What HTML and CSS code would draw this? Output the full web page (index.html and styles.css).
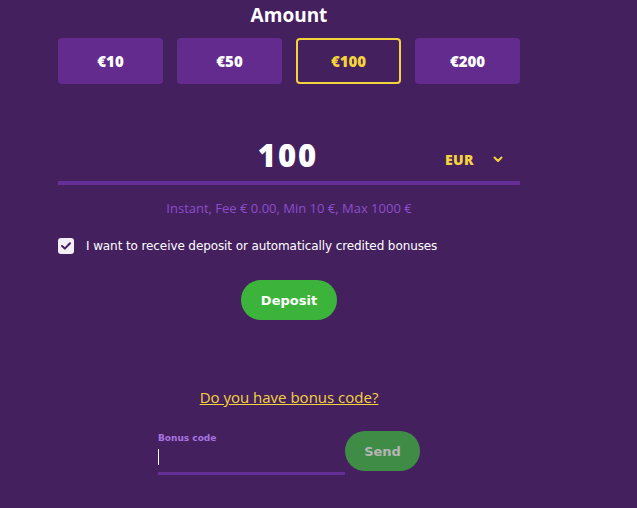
FILE: index.html
```html
<!DOCTYPE html>
<html>
<head>
<meta charset="utf-8">
<link rel="stylesheet" href="styles.css">
</head>
<body>
<div class="page">
  <div class="col">
    <h2 class="title">Amount</h2>
    <div class="amounts">
      <button class="amt">€10</button>
      <button class="amt">€50</button>
      <button class="amt active">€100</button>
      <button class="amt">€200</button>
    </div>
    <div class="field">
      <div class="value">100</div>
      <div class="currency">EUR
        <svg class="chev" width="10" height="7" viewBox="0 0 10 7"><path d="M1.5 1.5 L5 5 L8.5 1.5" fill="none" stroke="#f4d43c" stroke-width="2" stroke-linecap="round" stroke-linejoin="round"/></svg>
      </div>
    </div>
    <div class="info">Instant, Fee € 0.00, Min 10 €, Max 1000 €</div>
    <label class="check">
      <span class="box"><svg width="12" height="10" viewBox="0 0 12 10"><path d="M2 5 L4.8 7.6 L10 2.3" fill="none" stroke="#45205f" stroke-width="2" stroke-linecap="round" stroke-linejoin="round"/></svg></span>
      <span class="check-text">I want to receive deposit or automatically credited bonuses</span>
    </label>
    <div class="deposit-row"><button class="deposit">Deposit</button></div>
    <div class="bonus-link-row"><a class="bonus-link" href="#">Do you have bonus code?</a></div>
    <div class="bonus-row">
      <div class="bonus-field">
        <div class="bonus-label">Bonus code</div>
        <div class="bonus-input"><span class="caret"></span></div>
      </div>
      <button class="send">Send</button>
    </div>
  </div>
</div>
</body>
</html>
```

FILE: styles.css
```css
* { box-sizing: border-box; }
html, body { margin: 0; padding: 0; }
body {
  background: #45205f;
  width: 637px;
  height: 508px;
  overflow: hidden;
  font-family: "Open Sans", "DejaVu Sans", sans-serif;
}
.page { padding-left: 58px; }
.col { width: 462px; display: flex; flex-direction: column; }
.title {
  margin: 3px 0 0;
  text-align: center;
  color: #fff;
  font-size: 19px;
  font-weight: 700;
  line-height: 25px;
  height: 25px;
}
.amounts {
  margin-top: 10px;
  display: flex;
  gap: 14px;
}
.amt {
  width: 105px;
  height: 46px;
  border: none;
  border-radius: 4px;
  background: #622b8d;
  color: #fff;
  font-family: inherit;
  font-size: 15px;
  font-weight: 800;
  padding: 0;
}
.amt.active {
  background: transparent;
  border: 2px solid #f4d43c;
  color: #f4d43c;
}
.field {
  margin-top: 48px;
  height: 53px;
  border-bottom: 4px solid #652f97;
  position: relative;
  display: flex;
  justify-content: center;
  align-items: center;
}
.value {
  color: #fff;
  font-size: 31px;
  font-weight: 800;
  letter-spacing: 2px;
  line-height: 40px;
  margin-top: -3px;
  margin-left: -2px;
}
.currency {
  position: absolute;
  left: 387px;
  top: 18px;
  color: #f4d43c;
  font-size: 14px;
  font-weight: 800;
  letter-spacing: 0.3px;
  display: flex;
  align-items: center;
  gap: 19px;
}
.info {
  margin-top: 14px;
  text-align: center;
  color: #8a4ecb;
  font-size: 13px;
  line-height: 18px;
}
.check {
  margin-top: 20px;
  display: flex;
  align-items: center;
  gap: 12px;
  height: 18px;
}
.box {
  width: 16px;
  height: 16px;
  border-radius: 3px;
  background: #f3eef8;
  display: flex;
  align-items: center;
  justify-content: center;
}
.check-text {
  color: #fff;
  font-family: "DejaVu Sans", sans-serif;
  font-size: 12px;
  letter-spacing: -0.1px;
}
.deposit-row {
  margin-top: 25px;
  display: flex;
  justify-content: center;
}
.deposit {
  width: 96px;
  height: 40px;
  border: none;
  border-radius: 20px;
  background: #3cb43c;
  color: #fff;
  font-family: "DejaVu Sans", sans-serif;
  font-size: 13px;
  font-weight: 700;
  padding: 0;
}
.bonus-link-row {
  margin-top: 67px;
  display: flex;
  justify-content: center;
}
.bonus-link {
  color: #f4d43c;
  font-size: 15px;
  line-height: 20px;
}
.bonus-row {
  margin-top: 25px;
  margin-left: 100px;
  display: flex;
  align-items: flex-start;
}
.bonus-field { width: 187px; }
.bonus-label {
  color: #a775e0;
  font-family: "DejaVu Sans", sans-serif;
  font-size: 9px;
  font-weight: 700;
  line-height: 12px;
}
.bonus-input {
  height: 31px;
  border-bottom: 3px solid #652f97;
  padding-top: 5px;
}
.caret {
  display: block;
  width: 1px;
  height: 16px;
  background: #fff;
}
.send {
  margin-top: -1px;
  width: 75px;
  height: 40px;
  border: none;
  border-radius: 20px;
  background: #3f8c47;
  color: #b5b5b5;
  font-family: "DejaVu Sans", sans-serif;
  font-size: 13px;
  font-weight: 700;
  padding: 0;
}
```
